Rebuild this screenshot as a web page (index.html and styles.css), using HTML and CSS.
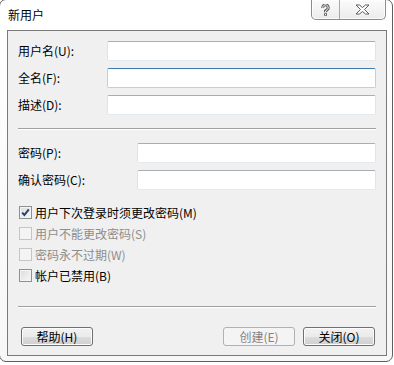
FILE: index.html
```html
<!DOCTYPE html>
<html lang="zh-CN">
<head>
  <meta charset="UTF-8" />
  <title>新用户</title>
  <link rel="stylesheet" href="styles.css">
</head>
<body>
  <div class="window">
    <div class="titlebar">
      <span class="title">新用户</span>
      <div class="caption-btns">
        <div class="cap help">
          <svg width="9" height="12" viewBox="0 0 9 12">
            <path d="M1.8 3.8 A2.7 2.7 0 1 1 6.2 5.6 L4.5 7 V8.2" fill="none" stroke="#5c5c5c" stroke-width="3"/>
            <rect x="3" y="9.3" width="3" height="2.4" fill="#5c5c5c"/>
            <path d="M1.8 3.8 A2.7 2.7 0 1 1 6.2 5.6 L4.5 7 V8.2" fill="none" stroke="#fff" stroke-width="1"/>
            <rect x="4" y="10" width="1" height="1" fill="#fff"/>
          </svg>
        </div>
        <div class="cap close">
          <svg width="15" height="11" viewBox="0 0 15 11">
            <polygon points="1,1 4.5,1 7.5,3.5 10.5,1 14,1 9.5,5.5 14,10 10.5,10 7.5,7.5 4.5,10 1,10 5.5,5.5" fill="#fff" stroke="#5c5c5c" stroke-width="1"/>
          </svg>
        </div>
      </div>
    </div>

    <div class="client">
      <div class="fields">
        <label>用户名(U):</label>
        <input type="text">
        <label>全名(F):</label>
        <input type="text" class="focused">
        <label>描述(D):</label>
        <input type="text">
      </div>

      <div class="sep sep-top"></div>

      <div class="fields pw">
        <label>密码(P):</label>
        <input type="password">
        <label>确认密码(C):</label>
        <input type="password">
      </div>

      <div class="checks">
        <div class="check">
          <span class="box">
            <svg width="11" height="11" viewBox="0 0 11 11">
              <path d="M2.2 5.6 L4.4 8 L8.8 2.4" fill="none" stroke="#2a3f6e" stroke-width="2"/>
            </svg>
          </span>
          <span>用户下次登录时须更改密码(M)</span>
        </div>
        <div class="check disabled">
          <span class="box"></span>
          <span>用户不能更改密码(S)</span>
        </div>
        <div class="check disabled">
          <span class="box"></span>
          <span>密码永不过期(W)</span>
        </div>
        <div class="check">
          <span class="box"></span>
          <span>帐户已禁用(B)</span>
        </div>
      </div>

      <div class="sep sep-bottom"></div>

      <div class="buttons">
        <button class="btn">帮助(H)</button>
        <div class="spacer"></div>
        <button class="btn" disabled>创建(E)</button>
        <button class="btn">关闭(O)</button>
      </div>
    </div>
  </div>
</body>
</html>
```

FILE: styles.css
```css
body {
  margin: 0;
  background-color: #fff;
  font-family: "Noto Sans CJK SC", "Noto Sans", sans-serif;
  font-size: 12px;
  color: #000;
}
.window {
  box-sizing: border-box;
  width: 394px;
  height: 363px;
  margin: -1px 0 0 -1px;
  border: 1px solid #5e5e5e;
  border-radius: 7px;
  background: linear-gradient(#ffffff, #f7f7f7);
  display: flex;
  flex-direction: column;
}
.titlebar {
  height: 30px;
  display: flex;
  justify-content: space-between;
  align-items: flex-start;
}
.title {
  padding: 7px 0 0 8px;
  line-height: 16px;
  font-size: 12px;
}
.caption-btns {
  display: flex;
  margin-right: 6px;
  border: 1px solid #8c8c8c;
  border-top: none;
  border-radius: 0 0 5px 5px;
  background: linear-gradient(#fbfbfb, #ececec);
  box-shadow: inset 0 0 0 1px rgba(255, 255, 255, 0.8);
}
.cap {
  height: 19px;
  display: flex;
  align-items: center;
  justify-content: center;
}
.cap.help {
  width: 27px;
  border-right: 1px solid #a8a8a8;
}
.cap.close {
  width: 45px;
}
.client {
  box-sizing: border-box;
  width: 380px;
  height: 326px;
  margin-left: 7px;
  border: 1px solid #7a7a7a;
  background-color: #f0f0f0;
  padding: 10px 10px 0 10px;
}
.fields {
  display: grid;
  grid-template-columns: 89px 1fr;
  row-gap: 7px;
  align-items: center;
}
.fields.pw {
  grid-template-columns: 119px 1fr;
  margin-top: 13px;
}
label {
  line-height: 20px;
}
input {
  box-sizing: border-box;
  height: 20px;
  margin: 0;
  border: 1px solid #e2e3ea;
  border-top-color: #abadb3;
  border-bottom-color: #e3e9ef;
  border-radius: 2px;
  background-color: #fff;
  outline: none;
}
input.focused {
  border-color: #b5d3ec;
  border-top-color: #3d7bad;
}
.sep {
  border-top: 1px solid #a0a0a0;
  border-bottom: 1px solid #fff;
}
.sep-top {
  margin-top: 13px;
}
.sep-bottom {
  margin-top: 21px;
}
.checks {
  margin-top: 12px;
  display: flex;
  flex-direction: column;
  gap: 1px;
}
.check {
  height: 20px;
  display: flex;
  align-items: center;
  gap: 3px;
  padding-left: 1px;
}
.box {
  box-sizing: border-box;
  width: 13px;
  height: 13px;
  border: 1px solid #8e8f8f;
  background: linear-gradient(135deg, #dcdcdc, #f8f8f8);
  box-shadow: inset 0 0 0 1px #f4f4f4;
  display: flex;
  align-items: center;
  justify-content: center;
}
.check.disabled {
  color: #8d8d8d;
}
.check.disabled .box {
  border-color: #c5c5c5;
  background: #f4f4f4;
  box-shadow: none;
}
.buttons {
  margin-top: 19px;
  display: flex;
  gap: 8px;
  padding: 0 1px 0 3px;
}
.spacer {
  flex: 1;
}
.btn {
  box-sizing: border-box;
  width: 72px;
  height: 19px;
  padding: 0;
  border: 1px solid #707070;
  border-radius: 3px;
  background: linear-gradient(#f2f2f2 0%, #ebebeb 50%, #dddddd 51%, #cfcfcf 100%);
  box-shadow: inset 0 0 0 1px #fcfcfc;
  font-family: "Noto Sans CJK SC", "Noto Sans", sans-serif;
  font-size: 12px;
  line-height: 16px;
  color: #000;
}
.btn:disabled {
  border-color: #adb2b5;
  background: #f4f4f4;
  box-shadow: none;
  color: #838383;
}
```
